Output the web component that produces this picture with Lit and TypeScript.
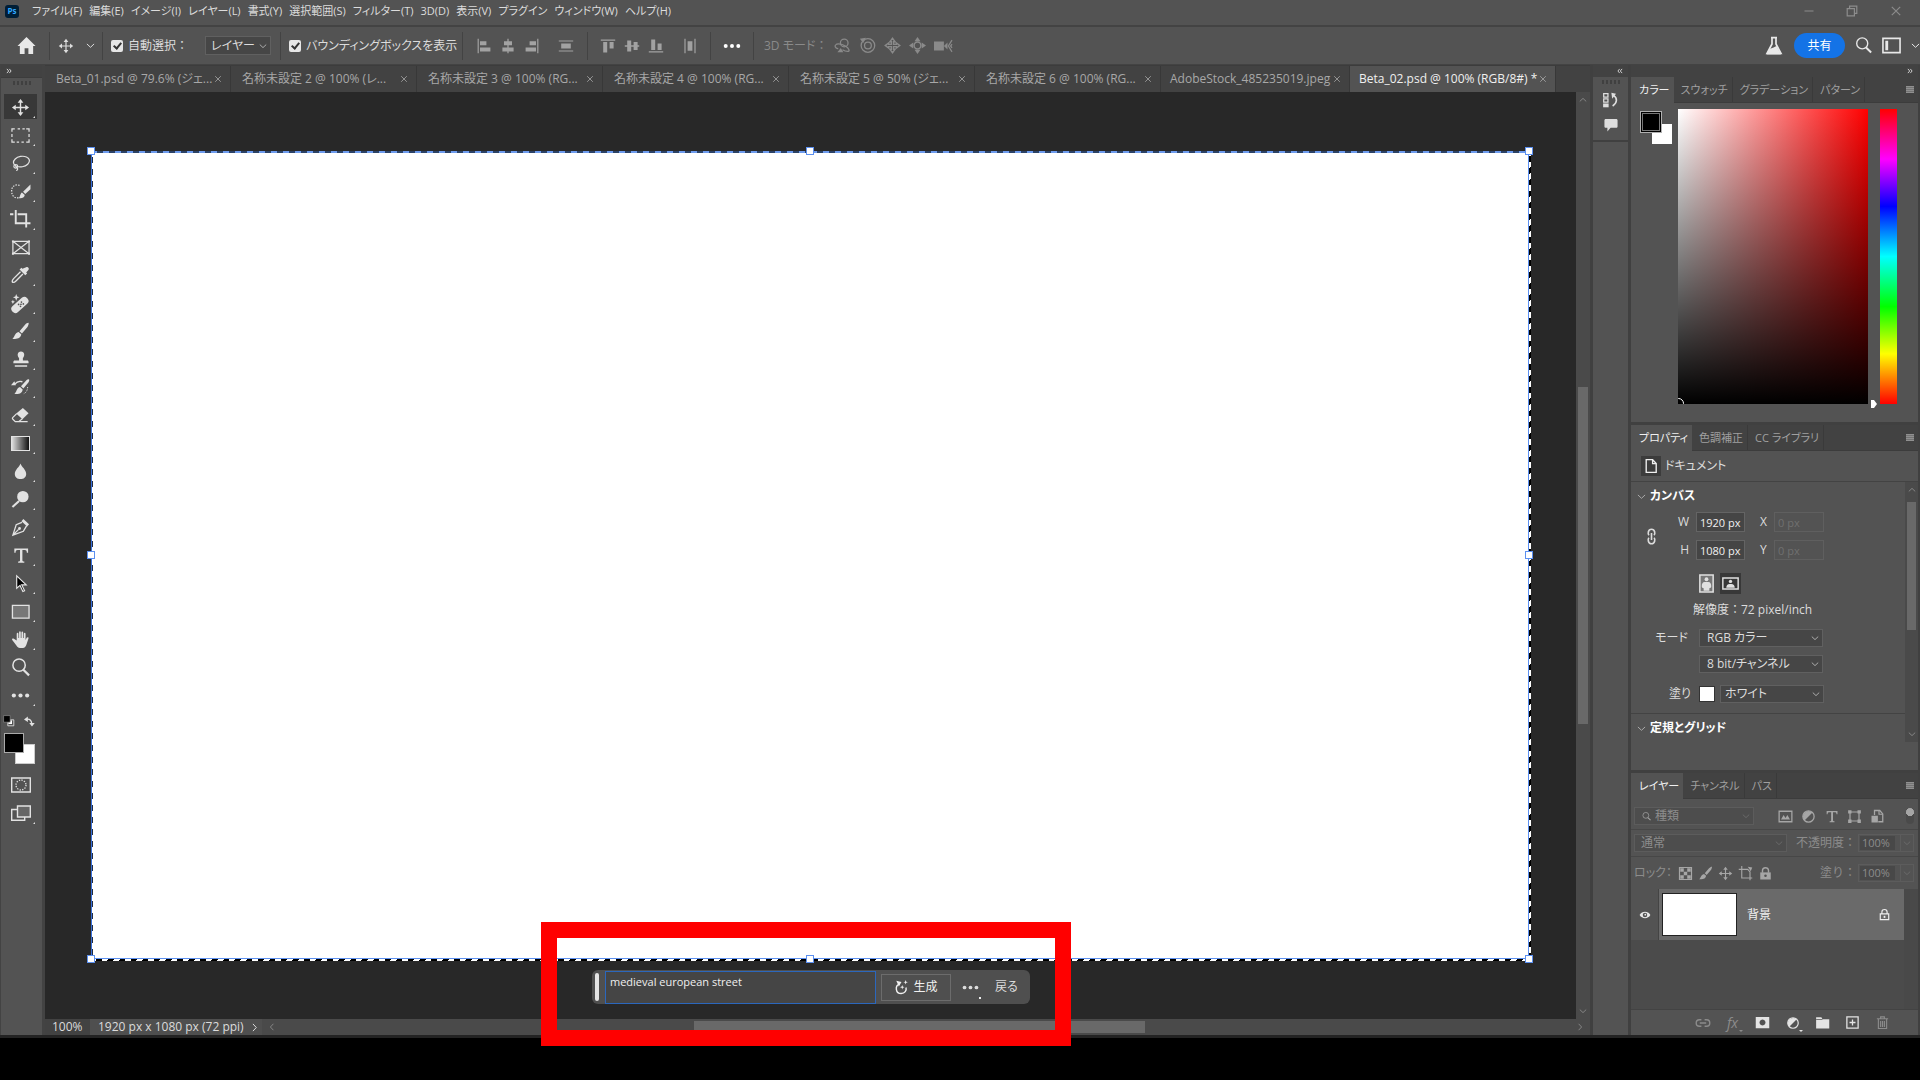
import { LitElement, html, svg, css, TemplateResult, SVGTemplateResult } from "lit";
import { customElement, property, state } from "lit/decorators.js";
import { classMap } from "lit/directives/class-map.js";

/* Icon set: every glyph is drawn on a 20 x 20 grid with currentColor. */
const ICONS: Record<string, SVGTemplateResult> = {
  home: svg`<path fill="currentColor" d="M10 1 0.500 10.500H3V19h5v-6h4v6h5v-8.500h2.500z"/>`,
  move: svg`<path d="M10 4v12M4 10h12" stroke="currentColor" stroke-width="1.500"/><path fill="currentColor" d="M10 1l3 4H7zM10 19l3-4H7zM1 10l4-3v6zM19 10l-4-3v6z"/>`,
  marquee: svg`<path fill="none" stroke="currentColor" stroke-width="1.300" d="M1 6V3h3M7 3h2.500M12 3h2.500M16 3h3v3M19 8.500v3M19 14v3h-3M13.500 17H11M8.500 17H6M4 17H1v-3M1 11.500v-3"/>`,
  lasso: svg`<ellipse cx="11" cy="8" rx="8.500" ry="5.500" fill="none" stroke="currentColor" stroke-width="1.300" transform="rotate(-10 11 8)"/><circle cx="5" cy="13" r="2" fill="none" stroke="currentColor" stroke-width="1.200"/><path d="M5 13c-1 1 2 1 2 2.500s-1 1-1 2.500" fill="none" stroke="currentColor" stroke-width="1.300"/>`,
  quick: svg`<path d="M9 3.500C4 2 0.500 5 .700 9.500c0 5 3 8 7.300 7" fill="none" stroke="currentColor" stroke-width="1.300" stroke-dasharray="1.500 1.300"/><path fill="currentColor" d="M20.500 2.500v5l-5.500 5-2.300-2.300zM11.500 11l3 2.800C14 17 11 17.500 8 17c1.800-1 1.500-5 3.500-6z"/>`,
  crop: svg`<path fill="none" stroke="currentColor" stroke-width="2" d="M5 0v14h10M7 4.500h9V18.500M-1 4.500h3.500M17 14h3.500"/>`,
  frame: svg`<path fill="none" stroke="currentColor" stroke-width="1.300" d="M2 3.500h17v13H2zM2 3.500l17 13M19 3.500l-17 13"/><path fill="currentColor" d="M1 2.500h2v2H1zM18 2.500h2v2h-2zM1 15.500h2v2H1zM18 15.500h2v2h-2z"/>`,
  eyedropper: svg`<path fill="currentColor" d="M16 1.200c1.500-1 3.500 1 2.500 2.800l-2.500 2.800 1 1-2 2-6-6 2-2 1 1z"/><path d="M10 6 3 13c-1.500 1.500-2 3-1.500 4 1 .700 2.500 0 4-1.500L12.500 8.500" fill="none" stroke="currentColor" stroke-width="1.400"/>`,
  heal: svg`<rect x="-2" y="6.500" width="21" height="8.500" rx="4" transform="rotate(-42 10 10)" fill="currentColor"/><g fill="#535353"><circle cx="8" cy="11" r=".9"/><circle cx="10" cy="13" r=".9"/><circle cx="11" cy="8.500" r=".9"/><circle cx="13" cy="10.500" r=".9"/><circle cx="10.500" cy="10.800" r=".9"/></g><path fill="currentColor" d="M5.500 0l1 2.500 2.500 1-2.500 1-1 2.500-1-2.500L2 3.500l2.500-1zM2 6l.700 1.500 1.500.700-1.500.700L2 10.400l-.700-1.500L0 8.200l1.300-.700z"/>`,
  brush: svg`<path fill="currentColor" d="M18.500 1c.5.500-.5 3-1 4l-6 7-2.500-2.300 6-7c1-1 3-2.200 3.500-1.700zM8 10.500l2.800 2.500C10.500 17 6 18.500 1.500 17.500 4 16 3.500 11.500 8 10.500z"/>`,
  stamp: svg`<path fill="currentColor" d="M10.500 1.500c4 0 4.300 4.500 2 7v2.500h4.500c1 0 1.500.700 1.500 1.500V14h-16v-1.500c0-.8.5-1.500 1.500-1.500h4.500V8.500c-2.300-2.500-2-7 2-7zM4 16h13v1.500H4z"/>`,
  history: svg`<path fill="currentColor" d="M19 1.500c.5.700 0 2-.5 3l-5.500 6.500-2.500-2.300 6-6.700c.7-.7 2-1 2.500-.5zM9.500 9.500l2.800 2.500c-.3 4-4.500 5.500-8.800 4.500 2.500-1 2-6 6-7zM0 7.500l3.500-4 1.700 4z"/><path d="M4 6.500c2-2.500 5-3.500 8-2.500" fill="none" stroke="currentColor" stroke-width="1.500"/><path d="M17.500 9.500c0 3-1.500 6-4 7" fill="none" stroke="currentColor" stroke-dasharray="1.300 1.300"/>`,
  eraser: svg`<path fill="currentColor" d="M12.500 2l6 5.500-6.500 6.500-6.500-6z"/><path fill="none" stroke="currentColor" stroke-width="1.300" d="M6 8l-4 4c-.7.700-.7 1.300 0 2l2.500 2.500h3.500l4-3M7 16.500h10.500"/>`,
  drop: svg`<path fill="currentColor" d="M10 1.500c1 3.500 6 6.500 6 11 0 3.300-2.700 5.500-6 5.500s-6-2.200-6-5.500c0-4.500 5-7.500 6-11z"/>`,
  dodge: svg`<circle cx="12.500" cy="7" r="6" fill="currentColor"/><path d="M8.500 11.500l-7 6.500" stroke="currentColor" stroke-width="2.200"/>`,
  pen: svg`<path fill="currentColor" d="M13 1l6 5.500-2 2.500-6-5.500z"/><path fill="none" stroke="currentColor" stroke-width="1.400" d="M11.500 4.500l-6 2.500-3.500 11 11-4 3.500-6M2 18l6-6"/><circle cx="9" cy="11" r="1.500" fill="currentColor"/>`,
  type: svg`<path fill="currentColor" d="M3.500 2.500h14.500v4.500h-1.300c-.2-2-.7-2.700-2.200-2.700h-2.500V15c0 1 .5 1.300 2 1.400v1.100H7.500v-1.100c1.500-.1 2-.4 2-1.400V4.300H7c-1.500 0-2 .7-2.200 2.700H3.500z"/>`,
  path: svg`<path fill="#000" stroke="#e6e6e6" stroke-width="1.200" d="M6 2v13l3.500-3 3 6.500 1.800-.9-3-6.100H16z"/>`,
  rect: svg`<path d="M1.500 3.500h17.500v13.500h-17.500z" fill="#777" stroke="currentColor" stroke-width="1.400"/>`,
  hand: svg`<path fill="currentColor" d="M6 11V4c0-1.300 1.800-1.300 1.800 0v4.500h.7V2.300c0-1.300 1.800-1.300 1.800 0v6.200h.7V2.500c0-1.300 1.800-1.300 1.800 0v6h.7V4c0-1.300 1.800-1.300 1.800 0v6.500l1.200-2.300c.8-1.200 2.300-.5 1.900.7l-2.200 6.500C15.500 18 13.500 19 11 19c-2.700 0-4.500-1-5.500-3L1.300 10.500c-.7-1.300.7-2 1.700-1.200z"/>`,
  search: svg`<circle cx="8.500" cy="7.500" r="6.500" fill="none" stroke="currentColor" stroke-width="1.600"/><path d="M13 12.300l6 6" stroke="currentColor" stroke-width="2.300"/>`,
  dots: svg`<g fill="currentColor"><circle cx="3" cy="10" r="2.200"/><circle cx="10" cy="10" r="2.200"/><circle cx="17" cy="10" r="2.200"/></g>`,
  mask: svg`<path d="M.7 3h18.600v14H.7z" fill="none" stroke="currentColor" stroke-width="1.400"/><circle cx="10" cy="10" r="5" fill="none" stroke="currentColor" stroke-width="1.300" stroke-dasharray="1.300 1.300"/>`,
  screens: svg`<path d="M6 6.500H.7v10.800h13V14" fill="none" stroke="currentColor" stroke-width="1.400"/><path d="M6.500 3h12.800v11H6.500z" fill="#666" stroke="currentColor" stroke-width="1.400"/>`,
  defaults: svg`<path d="M8 8h10v10H8z" fill="#535353" stroke="currentColor" stroke-width="1.400"/><path d="M9 9h6v6H9z" fill="#fff"/><path d="M1 1h11v11H1z" fill="#000" stroke="#999"/>`,
  swap: svg`<path d="M5 6c6-1 9 3 9 8" fill="none" stroke="currentColor" stroke-width="2.400"/><path fill="currentColor" d="M0 6.500 7 1v10zM9.500 12.500h10L14.500 19z"/>`,
  chevron: svg`<path d="M2 6.500l8 7.500 8-7.500" fill="none" stroke="currentColor" stroke-width="2.200"/>`,
  close: svg`<path d="M3 3l14 14M17 3 3 17" stroke="currentColor" stroke-width="2"/>`,
  minimize: svg`<path d="M1 10h18" stroke="currentColor" stroke-width="2"/>`,
  restore: svg`<path d="M2 6h12v12H2zM6 5V2h12v12h-3" fill="none" stroke="currentColor" stroke-width="2"/>`,
  double: svg`<path d="M3 3l6 7-6 7M11 3l6 7-6 7" fill="none" stroke="currentColor" stroke-width="3"/>`,
  doubleLeft: svg`<path d="M9 3l-6 7 6 7M17 3l-6 7 6 7" fill="none" stroke="currentColor" stroke-width="3"/>`,
  alignLeft: svg`<path fill="currentColor" d="M2 1h1.500v18H2zM5 4h8v5H5zM5 12h13v5H5z"/>`,
  alignCenter: svg`<path fill="currentColor" d="M9.200 1h1.600v18H9.200zM5 4h10v5H5zM3 12h14v5H3z"/>`,
  alignRight: svg`<path fill="currentColor" d="M16.500 1H18v18h-1.500zM7 4h8v5H7zM2 12h13v5H2z"/>`,
  spread: svg`<path fill="currentColor" d="M1 3h18v1.500H1zM4 7h12v6H4zM1 15.500h18V17H1z"/>`,
  alignTop: svg`<path fill="currentColor" d="M1 2h18v1.500H1zM4 5h5v13H4zM12 5h5v8h-5z"/>`,
  alignMiddle: svg`<path fill="currentColor" d="M1 9.200h18v1.600H1zM4 3h5v14H4zM12 5h5v10h-5z"/>`,
  alignBottom: svg`<path fill="currentColor" d="M1 16.500h18V18H1zM4 2h5v13H4zM12 7h5v8h-5z"/>`,
  spreadX: svg`<path fill="currentColor" d="M3 1h1.500v18H3zM7 4h6v12H7zM15.500 1H17v18h-1.500z"/>`,
  orbit: svg`<circle cx="12" cy="7" r="4.500" fill="none" stroke="currentColor" stroke-width="1.500"/><path d="M5 14c-4-1-5-4-2-5.500 3-1 7 0 11 2.500 4 3 5 6 2 6-2 0-4-.7-6-2" fill="none" stroke="currentColor" stroke-width="1.500"/><path d="M4 18h7l-3-5z" fill="currentColor"/>`,
  roll: svg`<circle cx="10.500" cy="10" r="8" fill="none" stroke="currentColor" stroke-width="1.500"/><circle cx="10.500" cy="10" r="4" fill="none" stroke="currentColor" stroke-width="1.500"/><path d="M1 2l7-1-3 6z" fill="currentColor"/>`,
  pan: svg`<path d="M8.700 8.700V5.500H7L10 1.500l3 4h-1.700v3.200h3.200V7l4 3-4 3v-1.700h-3.200v3.200H13l-3 4-3-4h1.700v-3.200H5.500V13l-4-3 4-3v1.700z" fill="none" stroke="currentColor" stroke-width="1.700"/>`,
  slide: svg`<circle cx="10" cy="10" r="4" fill="none" stroke="currentColor" stroke-width="1.800"/><path fill="currentColor" d="M10 0l3.500 5h-7zM10 20l3.500-5h-7zM0 10l5-3.500v7zM20 10l-5-3.500v7z"/>`,
  camera: svg`<path fill="currentColor" d="M0 5h11v10H0zM11 10l4-4v8z"/><path d="M20 3.500l-4 6.500 4 6.500M20 8l-1.500 2L20 12" fill="none" stroke="currentColor" stroke-width="1.400"/>`,
  flask: svg`<path d="M7 1.700h6M8 2v6L3 17.500h14L12 8V2" fill="none" stroke="currentColor" stroke-width="1.700"/><path fill="currentColor" d="M5.500 13l4-1.500 3-1.500 4.500 8.500H2.500z"/>`,
  workspace: svg`<path d="M1 2.500h18v15H1z" fill="none" stroke="currentColor" stroke-width="1.700"/><path d="M3.500 5h3v10h-3z" fill="currentColor"/>`,
  log: svg`<path d="M2 2h5v4H2zM2 8h5v4H2z" fill="none" stroke="currentColor" stroke-width="1.500"/><path d="M1.300 13.500h6.500V18H1.300z" fill="currentColor"/><path d="M13.500 4c5 3 4.500 9-1 12.500" fill="none" stroke="currentColor" stroke-width="1.900"/><path d="M11 1l5.500 1L12 8z" fill="currentColor"/>`,
  comment: svg`<path fill="currentColor" d="M3.500 2.500h13c1 0 1.700.7 1.700 1.700v7.600c0 1-.7 1.700-1.700 1.700h-7L5.500 18v-4.500h-2c-1 0-1.700-.7-1.700-1.700V4.200c0-1 .7-1.700 1.700-1.700z"/>`,
  page: svg`<path d="M4 2h8l4.500 5v11H4zM12 2v5h4.500" fill="none" stroke="currentColor" stroke-width="1.700"/>`,
  chain: svg`<g fill="none" stroke="currentColor" stroke-width="1.900"><path d="M7 8.500C5.500 7 5.700 1.500 10 1.500s4.500 5.500 3 7M7 11.500c-1.500 1.500-1.300 7 3 7s4.500-5.500 3-7M10 6v8"/></g>`,
  portrait: svg`<path d="M3 1h14v18H3z" fill="#777" stroke="currentColor" stroke-width="1.600"/><circle cx="10" cy="5.500" r="2" fill="currentColor"/><path d="M8 8.500h4c2 0 3 2 3 4.500 0 1.500-1 2-2 2v2.500H7V15c-1 0-2-.5-2-2 0-2.500 1-4.500 3-4.500z" fill="currentColor"/>`,
  landscape: svg`<path d="M1 3.500h18v13H1z" fill="none" stroke="currentColor" stroke-width="1.700"/><circle cx="10" cy="7.500" r="2" fill="currentColor"/><path d="M5 15c0-3 1.500-4.500 4-4.500h2c2.500 0 4 1.500 4 4.500z" fill="currentColor"/>`,
  image: svg`<path d="M1.500 3h17v14h-17z" fill="none" stroke="currentColor" stroke-width="1.700"/><path d="M4 14l3.500-6L10 12l2.500-4L16 14z" fill="currentColor"/>`,
  adjust: svg`<circle cx="10" cy="10" r="7.500" fill="none" stroke="currentColor" stroke-width="1.700"/><path d="M15.300 4.700A7.500 7.500 0 0 0 4.700 15.300z" fill="currentColor"/>`,
  shape: svg`<path d="M4 4h12v12H4z" fill="none" stroke="currentColor" stroke-width="1.600"/><path fill="currentColor" d="M1.500 1.500h4.500v4.500H1.500zM14 1.500h4.500v4.500H14zM1.500 14h4.500v4.500H1.500zM14 14h4.500v4.500H14z"/>`,
  smart: svg`<path d="M6 8V2h7l4 4.500V17h-6" fill="none" stroke="currentColor" stroke-width="1.700"/><path d="M12 2v5h5" fill="none" stroke="currentColor" stroke-width="1.500"/><path fill="currentColor" d="M2 9h8.500v9H2z"/>`,
  checker: svg`<path d="M2 2h16v16H2z" fill="none" stroke="currentColor" stroke-width="1.600"/><path fill="currentColor" d="M3 3h4.700v4.700H3zM12.300 3H17v4.700h-4.700zM7.700 7.700h4.600v4.600H7.700zM3 12.300h4.700V17H3zM12.300 12.300H17V17h-4.700z"/>`,
  artboard: svg`<path d="M5 0v16h14M1 4.500h12l3 3.500v11" fill="none" stroke="currentColor" stroke-width="1.500"/><path fill="currentColor" d="M13 1l6 1-2 5z"/>`,
  lock: svg`<path d="M6 9V6c0-5 8-5 8 0v3" fill="none" stroke="currentColor" stroke-width="1.900"/><path fill="currentColor" d="M3 8.500h14V18H3z"/><circle cx="10" cy="13" r="1.700" fill="#535353"/>`,
  lockOpen: svg`<path d="M6 9V6c0-5 8-5 8 0v3M3.500 9h13v9h-13z" fill="none" stroke="currentColor" stroke-width="1.800"/><path d="M8.700 12h2.600v3.200H8.700z" fill="currentColor"/>`,
  eye: svg`<path d="M1 10c4-7 14-7 18 0-4 7-14 7-18 0z" fill="currentColor"/><circle cx="10" cy="10" r="3.800" fill="#535353"/><circle cx="10.500" cy="9.500" r="1.500" fill="currentColor"/>`,
  link: svg`<path d="M8 6H5.500a4 4 0 0 0 0 8H8M12 6h2.500a4 4 0 0 1 0 8H12M6 10h8" fill="none" stroke="currentColor" stroke-width="1.700"/>`,
  layerMask: svg`<path fill="currentColor" fill-rule="evenodd" d="M1 2.500h18v15H1zM10 6a4 4 0 1 0 .01 0z"/>`,
  folder: svg`<path fill="currentColor" d="M1.500 3h7l1.500 2.500h9V18H1.500z"/><path d="M1.500 6h8.500" stroke="#535353"/>`,
  plus: svg`<path d="M2.500 2.500h15v15h-15zM10 6v8M6 10h8" fill="none" stroke="currentColor" stroke-width="1.700"/>`,
  trash: svg`<path d="M2.500 5h15M7.500 4.500V2.500h5v2M4.500 5.500v12.500h11V5.500M7.500 8v8M10 8v8M12.500 8v8" fill="none" stroke="currentColor" stroke-width="1.500"/>`,
  generate: svg`<path d="M7 5.500C1 8 2 18 9.500 18c5 0 7.500-4 6.500-8" fill="none" stroke="currentColor" stroke-width="1.900"/><path fill="currentColor" d="M3 1l7 1.500-3.500 6zM15.500 0l.8 2.200 2.200.8-2.200.8-.8 2.200-.8-2.200-2.200-.8 2.200-.8zM11 6.500l.7 2.300 2.300.7-2.300.7-.7 2.300-.7-2.300L8 9.500l2.300-.7z"/>`,
};

const icon = (name: string, size = 16): TemplateResult =>
  html`<svg width=${size} height=${size} viewBox="0 0 20 20" overflow="visible" aria-hidden="true">${ICONS[name]}</svg>`;

const base = css`
  * { box-sizing: border-box; }
  :host {
    box-sizing: border-box;
    font-family: "Open Sans", "Noto Sans CJK JP", sans-serif;
    font-feature-settings: "palt";
    font-size: 12px;
    line-height: 16px;
    color: #dcdcdc;
  }
  button, input, select, textarea {
    font: inherit;
    font-feature-settings: inherit;
    color: inherit;
    margin: 0;
    padding: 0;
    border: 0;
    border-radius: 0;
    background: none;
    outline: none;
  }
  button { display: inline-flex; align-items: center; justify-content: center; white-space: nowrap; }
  svg { display: block; flex: none; }
  .full { font-feature-settings: normal; }
  .select { position: relative; display: flex; align-items: center; border: 1px solid #606060; background: #464646; }
  .select select { appearance: none; width: 100%; height: 16px; padding: 0 16px 0 7px; }
  .select svg { position: absolute; right: 3px; pointer-events: none; color: #b8b8b8; }
  .grip { width: 18px; height: 4px; background: repeating-linear-gradient(90deg, #404040 0 2px, #535353 2px 4px); }
`;

@customElement("ps-menu-bar")
export class PsMenuBar extends LitElement {
  static styles = [base, css`
    :host { display: flex; align-items: center; justify-content: space-between; height: 25px; padding: 0 18px 3px 5px; background: #535353; font-size: 11px; }
    .left, nav, .window { display: flex; align-items: center; }
    .left { gap: 13px; }
    nav { gap: 7px; }
    .logo { width: 14px; height: 13px; border-radius: 3px; background: #001e36; color: #31a8ff; font-size: 8px; line-height: 12px; font-weight: 700; text-align: center; }
    .window { gap: 32px; color: #8c8c8c; }
  `];
  render() {
    const menus = ["ファイル(F)", "編集(E)", "イメージ(I)", "レイヤー(L)", "書式(Y)", "選択範囲(S)", "フィルター(T)", "3D(D)", "表示(V)", "プラグイン", "ウィンドウ(W)", "ヘルプ(H)"];
    return html`
      <div class="left"><span class="logo">Ps</span><nav>${menus.map((m) => html`<button>${m}</button>`)}</nav></div>
      <div class="window">
        <button aria-label="最小化">${icon("minimize", 10)}</button>
        <button aria-label="元に戻す">${icon("restore", 12)}</button>
        <button aria-label="閉じる">${icon("close", 12)}</button>
      </div>`;
  }
}

@customElement("ps-options-bar")
export class PsOptionsBar extends LitElement {
  static styles = [base, css`
    :host { display: flex; align-items: center; height: 39px; border-top: 2px solid #434343; background: #535353; }
    .cell { display: flex; align-items: center; height: 28px; padding: 0 10px; border-right: 1px solid #434343; }
    .home { width: 50px; padding: 0 0 0 17px; color: #e8e8e8; }
    .tool { gap: 12px; width: 53px; padding: 0 0 0 8px; color: #dcdcdc; }
    .auto { width: 178px; padding: 0 9px 0 8px; justify-content: space-between; }
    .bounds { width: 182px; padding: 0 0 0 8px; }
    .check { display: flex; align-items: center; gap: 5px; white-space: nowrap; }
    .check input { appearance: none; width: 12px; height: 12px; border-radius: 2px; background: #e6e6e6; display: grid; place-items: center; }
    .check input:checked::after { content: ""; width: 3px; height: 6px; margin-top: -2px; border: solid #333; border-width: 0 2px 2px 0; transform: rotate(40deg); }
    .select { width: 66px; height: 19px; }
    .select select { padding: 0 0 0 5px; }
    .icons { color: #a2a2a2; }
    .aligns { width: 125px; padding: 0 0 0 13px; gap: 8px; }
    .aligns button:last-child { margin-left: 10px; }
    .valigns { width: 123px; padding: 0 0 0 12px; gap: 8px; }
    .valigns button:last-child { margin-left: 10px; }
    .more { width: 43px; padding: 0; justify-content: center; color: #fff; }
    .mode { border: 0; gap: 8px; color: #8a8a8a; }
    .mode span { width: 62px; white-space: nowrap; }
    .end { margin-left: auto; display: flex; align-items: center; gap: 10px; color: #e8e8e8; }
    .share { width: 51px; height: 25px; border-radius: 13px; background: #1473e6; color: #fff; font-size: 12px; }
  `];
  render() {
    return html`
      <div class="cell home"><button aria-label="ホーム">${icon("home", 19)}</button></div>
      <div class="cell tool">${icon("move", 16)}${icon("chevron", 9)}</div>
      <div class="cell auto">
        <label class="check full"><input type="checkbox" checked>自動選択：</label>
        <div class="select"><select aria-label="自動選択"><option>レイヤー</option></select>${icon("chevron", 8)}</div>
      </div>
      <div class="cell bounds"><label class="check"><input type="checkbox" checked>バウンディングボックスを表示</label></div>
      <div class="cell icons aligns">
        ${["alignLeft", "alignCenter", "alignRight", "spread"].map((n) => html`<button aria-label=${n}>${icon(n, 16)}</button>`)}
      </div>
      <div class="cell icons valigns">
        ${["alignTop", "alignMiddle", "alignBottom", "spreadX"].map((n) => html`<button aria-label=${n}>${icon(n, 16)}</button>`)}
      </div>
      <div class="cell more"><button aria-label="その他">${icon("dots", 18)}</button></div>
      <div class="cell mode"><span>3D モード ：</span>
        ${["orbit", "roll", "pan", "slide", "camera"].map((n) => html`<button disabled aria-label=${n}>${icon(n, n === "camera" ? 18 : 17)}</button>`)}
      </div>
      <div class="end">
        <button aria-label="ベータ機能">${icon("flask", 20)}</button>
        <button class="share">共有</button>
        <button aria-label="検索">${icon("search", 17)}</button>
        <button aria-label="ワークスペース">${icon("workspace", 19)}</button>
        ${icon("chevron", 9)}
      </div>`;
  }
}

@customElement("ps-tool-bar")
export class PsToolBar extends LitElement {
  static styles = [base, css`
    :host { display: flex; flex-direction: column; width: 45px; background: #535353; border: solid #434343; border-width: 0 3px 0 1px; color: #e2e2e2; }
    .head { height: 13px; display: flex; align-items: center; padding-left: 5px; background: #424242; border-bottom: 1px solid #3c3c3c; }
    .grip { margin: 3px auto 8px; }
    .tools { display: flex; flex-direction: column; padding-left: 3px; }
    .tool { position: relative; width: 33px; height: 28px; }
    .tool.on::before { content: ""; position: absolute; inset: 1px 0 2px; background: #383838; }
    .tool svg { position: relative; }
    .tool.sub::after { content: ""; position: absolute; right: 2px; bottom: 3px; border: 1px solid; border-color: transparent #e0e0e0 #e0e0e0 transparent; }
    .gradient { width: 19px; height: 15px; border: 1px solid #e2e2e2; background: linear-gradient(90deg, #ddd, #111); }
    .mini { display: flex; justify-content: space-between; align-items: center; height: 24px; padding: 0 7px 0 2px; }
    .colors { position: relative; height: 34px; margin: 0 0 4px; }
    .fg, .bg { position: absolute; width: 20px; height: 20px; }
    .fg { left: 3px; top: 0; background: #000; border: 1px solid #aaa; }
    .bg { left: 14px; top: 11px; background: #fff; border: 1px solid #ccc; }
  `];
  @state() private active = "move";
  render() {
    const tools: [string, string, boolean][] = [
      ["move", "移動", true], ["marquee", "長方形選択", true], ["lasso", "なげなわ", true], ["quick", "クイック選択", true], ["crop", "切り抜き", true],
      ["frame", "フレーム", false], ["eyedropper", "スポイト", true], ["heal", "スポット修復", true], ["brush", "ブラシ", true], ["stamp", "スタンプ", true],
      ["history", "ヒストリーブラシ", true], ["eraser", "消しゴム", true], ["gradient", "グラデーション", true], ["drop", "ぼかし", true], ["dodge", "覆い焼き", true],
      ["pen", "ペン", true], ["type", "文字", true], ["path", "パス選択", true], ["rect", "長方形", true], ["hand", "手のひら", true],
      ["search", "ズーム", false], ["dots", "ツールバーを編集", true],
    ];
    return html`
      <div class="head">${icon("double", 6)}</div>
      <div class="grip"></div>
      <div class="tools">
        ${tools.map(([n, label, sub]) => html`<button class=${classMap({ tool: true, sub, on: this.active === n })} aria-label=${label} @click=${() => (this.active = n)}>
          ${n === "gradient" ? html`<span class="gradient"></span>` : icon(n, 19)}</button>`)}
      </div>
      <div class="mini"><button aria-label="初期設定">${icon("defaults", 12)}</button><button aria-label="入れ替え">${icon("swap", 11)}</button></div>
      <div class="colors"><button class="bg" aria-label="背景色"></button><button class="fg" aria-label="描画色"></button></div>
      <div class="tools">
        <button class="tool" aria-label="クイックマスク">${icon("mask", 20)}</button>
        <button class="tool sub" aria-label="スクリーンモード">${icon("screens", 20)}</button>
      </div>`;
  }
}

@customElement("ps-document-tabs")
export class PsDocumentTabs extends LitElement {
  static styles = [base, css`
    :host { display: flex; height: 27px; background: #424242; border-top: 1px solid #3c3c3c; color: #a8a8a8; }
    .tab { display: flex; align-items: center; justify-content: space-between; width: 186px; padding: 0 8px 0 11px; border-right: 1px solid #383838; }
    .tab.wide { width: 189px; padding-left: 9px; }
    .tab.active { width: 206px; background: #535353; color: #f0f0f0; padding-left: 9px; }
    .tab.active .close { color: #a8a8a8; }
  `];
  render() {
    const tabs = ["Beta_01.psd @ 79.6% (ジェ...", "名称未設定 2 @ 100% (レ...", "名称未設定 3 @ 100% (RG...", "名称未設定 4 @ 100% (RG...", "名称未設定 5 @ 50% (ジェ...", "名称未設定 6 @ 100% (RG...", "AdobeStock_485235019.jpeg", "Beta_02.psd @ 100% (RGB/8#) *"];
    return tabs.map((t, i) => html`<div class=${classMap({ tab: true, wide: i === 6, active: i === 7 })}>
      <button>${t}</button><button class="close" aria-label="閉じる">${icon("close", 8)}</button></div>`);
  }
}

@customElement("ps-canvas")
export class PsCanvas extends LitElement {
  static styles = [base, css`
    :host { position: relative; display: flex; min-width: 0; padding: 59px 47px 60px 46px; background: #282828; }
    .doc { position: relative; flex: 1; background: #fff; }
    .edge { position: absolute; }
    .top { left: 0; right: 0; top: 0; height: 2px; background: repeating-linear-gradient(90deg, #6d9bee 0 6px, #2b4266 6px 12px); }
    .left { top: 0; bottom: 0; left: 0; width: 2px; border-left: 1px solid #3a70d8; background: repeating-linear-gradient(180deg, #fff 0 6px, #222c40 6px 12px); }
    .bottom { left: 0; right: 0; bottom: -2px; height: 3px; border-top: 1px solid #5c90f0; background: repeating-linear-gradient(120deg, #fff 0 5px, #000 5px 10px); }
    .right { top: 0; bottom: 0; right: -2px; width: 3px; border-left: 1px solid #5c90f0; background: repeating-linear-gradient(150deg, #fff 0 5px, #000 5px 10px); }
    .handle { position: absolute; width: 8px; height: 8px; margin: -4px; background: #fff; border: 1px solid #5c90f0; }
    .x0 { left: 0; } .x1 { left: 50%; } .x2 { left: 100%; }
    .y0 { top: 0; } .y1 { top: 50%; } .y2 { top: 100%; }
    .taskbar { position: absolute; left: 547px; bottom: 15px; display: flex; align-items: center; width: 438px; height: 34px; padding-left: 3px; border-radius: 6px; background: #4f4f4f; z-index: 1; }
    .handlebar { width: 4px; height: 28px; margin-right: 6px; border-radius: 2px; background: #e4e4e4; }
    textarea { width: 271px; height: 33px; padding: 2px 4px; border: 1px solid #2b67bd; background: #454545; color: #f0f0f0; font-size: 11px; resize: none; overflow: hidden; }
    .generate { width: 70px; height: 27px; margin: 0 11px 0 5px; gap: 4px; border: 1px solid #6c6c6c; color: #f0f0f0; }
    .more { position: relative; }
    .more::after { content: ""; position: absolute; right: -2px; bottom: -3px; width: 2px; height: 2px; background: #eee; }
    .back { margin-left: 16px; }
    .callout { position: absolute; left: 496px; bottom: -27px; width: 530px; height: 124px; border: 16px solid #f00; z-index: 2; pointer-events: none; }
  `];
  render() {
    const spots = ["x0 y0", "x1 y0", "x2 y0", "x0 y1", "x2 y1", "x0 y2", "x1 y2", "x2 y2"];
    return html`
      <div class="doc">
        ${["top", "left", "bottom", "right"].map((s) => html`<span class="edge ${s}"></span>`)}
        ${spots.map((s) => html`<span class="handle ${s}"></span>`)}
      </div>
      <div class="taskbar">
        <span class="handlebar"></span>
        <textarea aria-label="プロンプト" .value=${"medieval european street"} spellcheck="false"></textarea>
        <button class="generate">${icon("generate", 15)}生成</button>
        <button class="more" aria-label="その他">${icon("dots", 17)}</button>
        <button class="back">戻る</button>
      </div>
      <div class="callout"></div>`;
  }
}

@customElement("ps-scrollbar")
export class PsScrollbar extends LitElement {
  @property({ type: Number }) start = 0;
  @property({ type: Number }) size = 50;
  static styles = [base, css`
    :host { display: flex; flex-direction: column; align-items: center; background: #4a4a4a; color: #8c8c8c; }
    .up { transform: rotate(180deg); }
    .track { position: relative; flex: 1; align-self: stretch; margin: 4px 2px; }
    .thumb { position: absolute; left: 0; right: 0; background: #696969; }
    svg { margin: 4px 0; }
  `];
  render() {
    return html`<span class="up">${icon("chevron", 8)}</span>
      <div class="track"><div class="thumb" style="top:${this.start}%;height:${this.size}%"></div></div>
      <span>${icon("chevron", 8)}</span>`;
  }
}

@customElement("ps-status-bar")
export class PsStatusBar extends LitElement {
  static styles = [base, css`
    :host { display: flex; align-items: center; height: 16px; background: #4a4a4a; color: #dcdcdc; }
    .zoom { width: 45px; height: 16px; padding-left: 7px; background: #424242; }
    .info { width: 172px; height: 16px; padding: 0 3px 0 8px; display: flex; align-items: center; justify-content: space-between; background: #4f4f4f; white-space: nowrap; }
    .info svg { transform: rotate(-90deg); }
    .prev, .next { width: 14px; display: grid; place-items: center; color: #8c8c8c; margin: 0 3px; }
    .prev { transform: rotate(90deg); }
    .next { transform: rotate(-90deg); }
    .track { position: relative; flex: 1; height: 12px; }
    .thumb { position: absolute; top: 0; bottom: 0; background: #696969; }
  `];
  render() {
    return html`<input class="zoom" aria-label="ズーム" value="100%">
      <span class="info">1920 px x 1080 px (72 ppi)${icon("chevron", 9)}</span>
      <span class="prev">${icon("chevron", 8)}</span>
      <div class="track"><div class="thumb" style="left:32%;width:35%"></div></div>
      <span class="next">${icon("chevron", 8)}</span>`;
  }
}

const panelTabs = (tabs: string[]) => html`
  <div class="tabs">${tabs.map((t, i) => html`<button class=${classMap({ tab: true, on: i === 0 })}>${t}</button>`)}
    <button class="menu" aria-label="パネルメニュー"></button></div>`;

const panel = css`
  :host { display: flex; flex-direction: column; background: #535353; border-bottom: 3px solid #404040; }
  .tabs { display: flex; height: 26px; background: #424242; border-bottom: 1px solid #3c3c3c; }
  .tab { padding: 0 4px 0 7px; border-right: 1px solid #3a3a3a; color: #a0a0a0; font-size: 11px; height: 25px; }
  .tab.on { padding-left: 8px; background: #535353; color: #f0f0f0; height: 26px; border: 0; }
  .menu { width: 8px; height: 7px; margin: 9px 4px 0 auto; background: repeating-linear-gradient(#909090 0 1px, #747474 1px 2px); }
`;

@customElement("ps-color-panel")
export class PsColorPanel extends LitElement {
  static styles = [base, panel, css`
    .body { display: flex; height: 319px; padding: 6px 21px 18px 9px; }
    .chips { position: relative; width: 38px; }
    .chip { position: absolute; width: 20px; height: 20px; }
    .front { left: 0; top: 2px; width: 22px; height: 22px; background: #000; border: 1px solid #b0b0b0; outline: 1px solid #777; outline-offset: -3px; }
    .behind { left: 12px; top: 15px; background: #fff; }
    .field { position: relative; overflow: hidden; flex: 1; background: linear-gradient(to top, #000, transparent), linear-gradient(to right, #fff, #f00); }
    .ring { position: absolute; left: -5px; bottom: -5px; width: 11px; height: 11px; border: 1px solid #fff; border-radius: 50%; }
    .slot { position: relative; width: 12px; }
    .mark { position: absolute; left: 3px; bottom: -4px; width: 6px; height: 8px; background: #fff; clip-path: polygon(0 0, 50% 0, 100% 50%, 50% 100%, 0 100%); }
    .hue { width: 17px; background: linear-gradient(#f00, #f0f 17%, #00f 33%, #0ff 50%, #0f0 67%, #ff0 83%, #f00); }
  `];
  render() {
    return html`${panelTabs(["カラー", "スウォッチ", "グラデーション", "パターン"])}
      <div class="body">
        <div class="chips"><button class="chip behind" aria-label="背景色"></button><button class="chip front" aria-label="描画色"></button></div>
        <div class="field"><span class="ring"></span></div>
        <div class="slot"><span class="mark"></span></div>
        <div class="hue"></div>
      </div>`;
  }
}

@customElement("ps-properties-panel")
export class PsPropertiesPanel extends LitElement {
  static styles = [base, panel, css`
    .doc { display: flex; align-items: center; gap: 4px; height: 31px; padding-left: 10px; border-bottom: 1px solid #434343; }
    .page { display: grid; place-items: center; width: 20px; height: 20px; background: #3c3c3c; color: #f0f0f0; }
    .split { display: flex; height: 260px; margin-bottom: 28px; }
    .content { flex: 1; }
    h3 { display: flex; align-items: center; gap: 4px; margin: 0; padding-left: 6px; height: 28px; font-size: 12px; line-height: 16px; font-weight: 700; color: #fff; }
    h3 svg { color: #aaa; }
    .size { display: grid; grid-template-columns: 44px 14px 7px 49px 15px 14px 50px; gap: 8px 0; align-items: center; padding: 2px 0 0; }
    .size .chain { grid-row: 1 / 3; padding-left: 12px; color: #dcdcdc; }
    .size label { text-align: right; }
    .size .w { grid-column: 2; }
    .size input { grid-column: 4; width: 49px; height: 20px; padding-left: 3px; border: 1px solid #646464; background: #454545; color: #f0f0f0; font-size: 11px; }
    .size .x { grid-column: 6; text-align: left; }
    .size .off { grid-column: 7; width: 50px; background: none; border-color: #5f5f5f; color: #707070; }
    .orient { display: flex; gap: 3px; padding: 13px 0 8px 65px; color: #e0e0e0; }
    .orient button { width: 21px; height: 21px; }
    .orient .on { background: #383838; }
    .res { margin: 0; padding-left: 62px; }
    .row { display: flex; align-items: center; height: 18px; margin-top: 8px; }
    .row label { width: 57px; text-align: right; }
    .row .select { width: 124px; height: 18px; margin-left: 11px; }
    .row .narrow { width: 104px; margin-left: 5px; }
    .row .narrow select { padding-left: 4px; }
    .row.first { margin-top: 11px; }
    .row.fill { margin-top: 12px; }
    .fill label { width: 60px; }
    .white { width: 16px; height: 16px; margin-left: 8px; background: #fff; border: 1px solid #333; }
    .next { margin-top: 10px; border-top: 1px solid #434343; }
    ps-scrollbar { width: 13px; }
  `];
  render() {
    return html`${panelTabs(["プロパティ", "色調補正", "CC ライブラリ"])}
      <div class="doc"><span class="page">${icon("page", 16)}</span>ドキュメント</div>
      <div class="split"><div class="content">
        <h3>${icon("chevron", 9)}カンバス</h3>
        <div class="size">
          <span class="chain">${icon("chain", 17)}</span>
          <label class="w" for="w">W</label><input id="w" value="1920 px">
          <label class="x" for="x">X</label><input class="off" id="x" value="0 px" disabled>
          <label class="w" for="h">H</label><input id="h" value="1080 px">
          <label class="x" for="y">Y</label><input class="off" id="y" value="0 px" disabled>
        </div>
        <div class="orient"><button aria-label="縦">${icon("portrait", 19)}</button><button class="on" aria-label="横">${icon("landscape", 17)}</button></div>
        <p class="res full">解像度：72 pixel/inch</p>
        <div class="row first"><label for="mode">モード</label><div class="select"><select id="mode"><option>RGB カラー</option></select>${icon("chevron", 8)}</div></div>
        <div class="row"><label for="depth"></label><div class="select"><select id="depth" aria-label="ビット数"><option>8 bit/チャンネル</option></select>${icon("chevron", 8)}</div></div>
        <div class="row fill"><label for="fill">塗り</label><span class="white"></span><div class="select narrow"><select id="fill"><option>ホワイト</option></select>${icon("chevron", 8)}</div></div>
        <div class="next"><h3>${icon("chevron", 9)}定規とグリッド</h3></div>
      </div><ps-scrollbar .start=${0} .size=${58}></ps-scrollbar></div>`;
  }
}

@customElement("ps-layers-panel")
export class PsLayersPanel extends LitElement {
  static styles = [base, panel, css`
    :host { flex: 1; border-bottom: 0; }
    .bar { display: flex; align-items: center; padding: 0 4px 0 3px; border-bottom: 1px solid #474747; color: #8c8c8c; }
    .filter { height: 31px; padding-top: 4px; color: #a6a6a6; }
    .blend { height: 27px; }
    .locks { height: 32px; border: 0; }
    .select { height: 18px; border-color: #5c5c5c; background: #4d4d4d; color: #8c8c8c; }
    .select svg { color: #6c6c6c; }
    .kind { width: 120px; }
    .kind select { padding-left: 20px; }
    .select .glass { left: 7px; right: auto; color: #a6a6a6; }
    .kinds { display: flex; gap: 8px; margin-left: 24px; }
    .toggle { width: 8px; height: 16px; margin-left: auto; border-radius: 4px; background: radial-gradient(circle at 4px 4px, #a6a6a6 0 4px, #4a4a4a 4px); }
    .mode { width: 153px; }
    .mode select { padding-left: 6px; }
    .label { margin-left: auto; white-space: nowrap; }
    .pct { display: flex; margin-left: 2px; height: 18px; border: 1px solid #5c5c5c; background: #535353; align-items: center; }
    .pct input { width: 35px; height: 14px; margin: 0 5px 0 1px; padding-left: 2px; background: #484848; font-size: 11px; }
    .pct span { display: grid; place-items: center; width: 13px; height: 16px; border-left: 1px solid #5c5c5c; color: #6c6c6c; }
    .lockset { display: flex; gap: 5px; margin-left: 6px; color: #a6a6a6; }
    .list { flex: 1; display: flex; background: #4b4b4b; }
    .rows { flex: 1; }
    .layer { display: flex; height: 51px; }
    .vis { width: 28px; background: #535353; color: #e8e8e8; border-right: 1px solid #444; }
    .item { flex: 1; display: flex; align-items: center; gap: 10px; padding: 0 13px 0 3px; background: #6a6a6a; color: #f0f0f0; }
    .item svg { margin-left: auto; }
    .thumb { width: 75px; height: 43px; background: #fff; border: 1px solid #222; }
    .rail { width: 14px; background: #494949; }
    .foot { display: flex; align-items: center; justify-content: flex-end; gap: 15px; height: 26px; padding-right: 28px; border-top: 1px solid #434343; color: #e4e4e4; }
    .foot .off { color: #8c8c8c; }
    .foot button { width: 15px; height: 20px; position: relative; }
    .foot .fx { font-style: italic; font-size: 14px; }
    .sub::after { content: ""; position: absolute; right: -3px; bottom: 1px; border: 2px solid transparent; border-top-color: currentColor; border-bottom: 0; }
  `];
  render() {
    return html`${panelTabs(["レイヤー", "チャンネル", "パス"])}
      <div class="bar filter">
        <div class="select kind"><svg class="glass" width="9" height="9" viewBox="0 0 20 20" overflow="visible">${ICONS.search}</svg><select aria-label="種類"><option>種類</option></select>${icon("chevron", 8)}</div>
        <div class="kinds">${["image", "adjust", "type", "shape", "smart"].map((n) => html`<button aria-label=${n}>${icon(n, 15)}</button>`)}</div>
        <button class="toggle" aria-label="フィルター"></button>
      </div>
      <div class="bar blend">
        <div class="select mode"><select aria-label="描画モード"><option>通常</option></select>${icon("chevron", 8)}</div>
        <label class="label full" for="op">不透明度：</label><div class="pct"><input id="op" value="100%"><span>${icon("chevron", 8)}</span></div>
      </div>
      <div class="bar locks">
        <span>ロック：</span>
        <div class="lockset">${["checker", "brush", "move", "artboard", "lock"].map((n) => html`<button aria-label=${n}>${icon(n, 15)}</button>`)}</div>
        <label class="label full" for="fl">塗り：</label><div class="pct"><input id="fl" value="100%"><span>${icon("chevron", 8)}</span></div>
      </div>
      <div class="list"><div class="rows"><div class="layer">
        <button class="vis" aria-label="表示">${icon("eye", 12)}</button>
        <div class="item"><span class="thumb"></span><span>背景</span>${icon("lockOpen", 13)}</div>
      </div></div><div class="rail"></div></div>
      <div class="foot">
        <button class="off" aria-label="リンク">${icon("link", 16)}</button>
        <button class="off fx sub">fx</button>
        <button aria-label="マスク">${icon("layerMask", 15)}</button>
        <button class="sub" aria-label="調整">${icon("adjust", 14)}</button>
        <button aria-label="グループ">${icon("folder", 15)}</button>
        <button aria-label="新規">${icon("plus", 15)}</button>
        <button class="off" aria-label="削除">${icon("trash", 15)}</button>
      </div>`;
  }
}

@customElement("app-root")
export class AppRoot extends LitElement {
  static styles = [base, css`
    :host { display: flex; flex-direction: column; height: 100vh; padding-bottom: 42px; background: #000; overflow: hidden; }
    .work { flex: 1; min-height: 0; display: grid; grid-template-columns: auto minmax(0, 1fr) auto auto; border-bottom: 3px solid #232323; border-top: 1px solid #434343; background: #404040; }
    .center { display: flex; flex-direction: column; min-width: 0; margin-right: 3px; }
    .stage { flex: 1; display: flex; min-height: 0; }
    ps-canvas { flex: 1; }
    .stage ps-scrollbar { width: 14px; }
    .dock, .panels { display: flex; flex-direction: column; }
    .head { height: 12px; display: flex; align-items: center; justify-content: flex-end; padding-right: 5px; background: #424242; }
    .dock { width: 35px; }
    .icons { display: flex; flex-direction: column; align-items: center; gap: 8px; height: 65px; padding-top: 3px; background: #535353; border-bottom: 2px solid #404040; color: #dedede; }
    .rest { flex: 1; background: #535353; }
    .panels { width: 292px; padding: 0 2px 0 3px; }
  `];
  render() {
    return html`
      <ps-menu-bar></ps-menu-bar>
      <ps-options-bar></ps-options-bar>
      <div class="work">
        <ps-tool-bar></ps-tool-bar>
        <div class="center">
          <ps-document-tabs></ps-document-tabs>
          <div class="stage"><ps-canvas></ps-canvas><ps-scrollbar .start=${31} .size=${38}></ps-scrollbar></div>
          <ps-status-bar></ps-status-bar>
        </div>
        <div class="dock">
          <div class="head">${icon("doubleLeft", 6)}</div>
          <div class="icons"><span class="grip"></span><button aria-label="ヒストリー">${icon("log", 17)}</button><button aria-label="コメント">${icon("comment", 16)}</button></div>
          <div class="rest"></div>
        </div>
        <div class="panels">
          <div class="head">${icon("double", 6)}</div>
          <ps-color-panel></ps-color-panel>
          <ps-properties-panel></ps-properties-panel>
          <ps-layers-panel></ps-layers-panel>
        </div>
      </div>`;
  }
}
